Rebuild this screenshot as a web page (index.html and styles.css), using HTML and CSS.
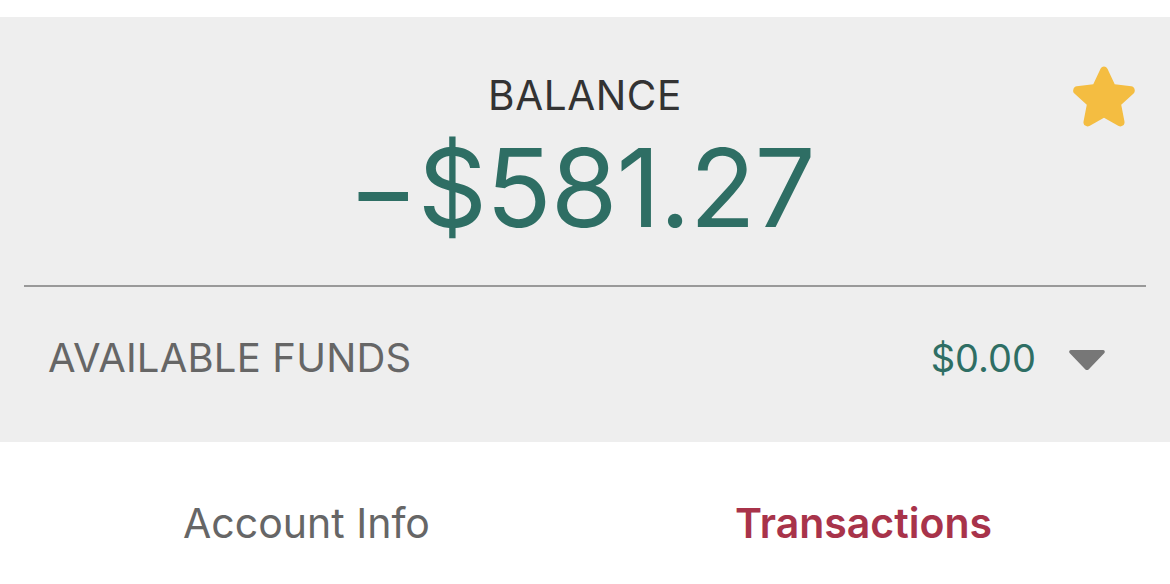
FILE: index.html
```html
<!DOCTYPE html>
<html>
<head>
<meta charset="utf-8">
<link rel="stylesheet" href="styles.css">
</head>
<body>
<div class="top-strip"></div>
<section class="panel">
  <div class="balance">
    <div class="balance-label">BALANCE</div>
    <div class="balance-amount">&minus;$581.27</div>
    <svg class="star" viewBox="0 0 24 24" width="78" height="78" aria-hidden="true">
      <path d="M12 2.6c.5 0 .9.3 1.1.8l2.2 4.7 5.1.6c.5.1.9.4 1 .9.2.5 0 1-.3 1.3l-3.8 3.5 1 5.1c.1.5-.1 1-.5 1.3-.4.3-.9.3-1.3.1L12 18.4l-4.5 2.5c-.4.2-.9.2-1.3-.1-.4-.3-.6-.8-.5-1.3l1-5.1-3.8-3.5c-.4-.3-.5-.8-.3-1.3.1-.5.5-.8 1-.9l5.1-.6 2.2-4.7c.2-.5.6-.8 1.1-.8z" fill="#f4bd41"/>
    </svg>
  </div>
  <div class="divider"></div>
  <div class="funds">
    <span class="funds-label">AVAILABLE FUNDS</span>
    <div class="funds-right">
      <span class="funds-amount">$0.00</span>
      <svg class="caret" viewBox="0 0 38 24" width="38" height="24" aria-hidden="true">
        <path d="M3 2h32c1.6 0 2.4 1.8 1.4 3L20.6 21.4c-.8.9-2.4.9-3.2 0L1.6 5C.6 3.8 1.4 2 3 2z" fill="#777"/>
      </svg>
    </div>
  </div>
</section>
<nav class="tabs">
  <div class="tab">Account Info</div>
  <div class="tab active">Transactions</div>
</nav>
</body>
</html>
```

FILE: styles.css
```css
* { box-sizing: border-box; }
html, body { margin: 0; padding: 0; background: #fff; }
body {
  width: 1170px;
  height: 584px;
  overflow: hidden;
  font-family: Inter, "Noto Sans", "Liberation Sans", sans-serif;
}
.top-strip { height: 17px; background: #fff; }
.panel {
  background: #eeeeee;
  height: 425px;
  display: flex;
  flex-direction: column;
}
.balance {
  position: relative;
  height: 268px;
  display: flex;
  flex-direction: column;
  align-items: center;
  padding-top: 56px;
}
.balance-label {
  font-size: 40.5px;
  line-height: 46px;
  color: #333;
  letter-spacing: 0.6px;
}
.balance-amount {
  font-size: 108px;
  line-height: 110px;
  color: #2e6e64;
  letter-spacing: -1px;
  margin-top: 14px;
  margin-left: -8px;
}
.star {
  position: absolute;
  right: 27px;
  top: 41px;
}
.divider {
  height: 2px;
  background: #999;
  margin: 0 24px;
}
.funds {
  flex: 1;
  display: flex;
  align-items: center;
  justify-content: space-between;
  padding: 0 64px 14px 48px;
}
.funds-label {
  font-size: 40px;
  letter-spacing: 0.2px;
  color: #666;
}
.funds-right {
  display: flex;
  align-items: center;
  gap: 32px;
}
.funds-amount {
  font-size: 38px;
  color: #2e6e64;
}
.caret { margin-top: 4px; }
.tabs {
  display: flex;
  padding: 20px 28px 0;
  height: 142px;
  align-items: center;
}
.tab {
  flex: 1;
  text-align: center;
  font-size: 41px;
  color: #666;
}
.tab.active {
  color: #a8334a;
  font-weight: 600;
  font-size: 41px;
}
```
